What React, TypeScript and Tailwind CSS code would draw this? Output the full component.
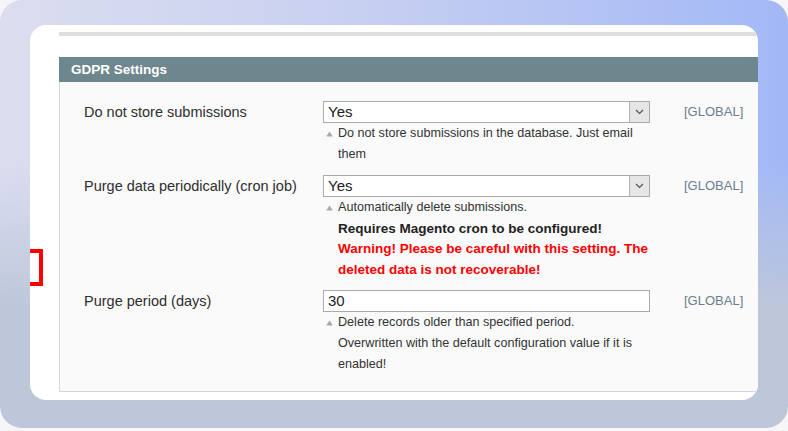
import React from 'react';

const font = { fontFamily: '"Liberation Sans", Arial, sans-serif' };

const Chevron: React.FC = () => (
  <svg width="9" height="6" viewBox="0 0 9 6" fill="none">
    <path d="M1 1l3.5 3.5L8 1" stroke="#555" strokeWidth="1.2" />
  </svg>
);

const Triangle: React.FC = () => (
  <svg width="7" height="6" viewBox="0 0 7 6">
    <path d="M3.5 0.5L6.8 5.5H0.2z" fill="#a3a9ad" />
  </svg>
);

const SelectBox: React.FC<{ value: string }> = ({ value }) => (
  <div className="flex h-[22px] items-stretch border border-[#aaaaaa] bg-white">
    <span className="pl-[4px] text-[15px] leading-[20px] text-[#222]">{value}</span>
    <span className="ml-auto flex w-[20px] items-center justify-center border-l border-[#b3b3b3] bg-[#e6e6e6]">
      <Chevron />
    </span>
  </div>
);

const TextBox: React.FC<{ value: string }> = ({ value }) => (
  <div className="h-[22px] border border-[#aaaaaa] bg-white pl-[4px] text-[15px] leading-[20px] text-[#222]">
    {value}
  </div>
);

const Note: React.FC<{ children: React.ReactNode }> = ({ children }) => (
  <div className="flex text-[12.6px] leading-[21px] text-[#333]">
    <span className="flex h-[21px] w-[15px] shrink-0 items-center pl-[3px]">
      <Triangle />
    </span>
    <div className="w-[312px]">{children}</div>
  </div>
);

const Row: React.FC<{ label: string; control: React.ReactNode; children: React.ReactNode }> = ({
  label,
  control,
  children,
}) => (
  <div className="flex items-start">
    <div className="w-[239px] text-[14.5px] leading-[22px] text-[#2e2e2e]">{label}</div>
    <div className="w-[327px]">
      {control}
      <Note>{children}</Note>
    </div>
    <div className="ml-[34px] text-[13px] leading-[22px] text-[#6b7d8e]">[GLOBAL]</div>
  </div>
);

const App: React.FC = () => {
  return (
    <div className="h-[431px] w-[788px] overflow-hidden bg-[#f6f6f9]" style={font}>
      {/* gradient frame */}
      <div className="h-[428px] w-[788px] rounded-[22px] bg-[linear-gradient(to_bottom,rgba(189,199,217,0)_38%,#bdc7d9_72%),linear-gradient(to_right,#dcdeef_0%,#c8d0f1_45%,#a2b8f6_100%)] pl-[30px] pt-[25px]">
        {/* white card */}
        <div className="relative h-[375px] w-[728px] overflow-hidden rounded-[16px] bg-white pl-[29px] pt-[7px]">
          <div className="h-[4px] w-[760px] bg-[#dedede]" />

          <div className="mt-[21px] w-[760px]">
            <div className="h-[25px] bg-[#6e868d] pl-[12px] text-[13.5px] font-bold leading-[25px] text-white">
              GDPR Settings
            </div>
            <div className="flex h-[310px] flex-col gap-[10px] border-x border-b border-[#d6d6d6] bg-[#fafafa] pl-[24px] pt-[19px]">
              <Row label="Do not store submissions" control={<SelectBox value="Yes" />}>
                Do not store submissions in the database. Just email them
              </Row>
              <Row label="Purge data periodically (cron job)" control={<SelectBox value="Yes" />}>
                <div>Automatically delete submissions.</div>
                <div className="text-[13.5px] font-bold leading-[21px] text-[#222]">
                  Requires Magento cron to be configured!
                </div>
                <div className="text-[13.5px] font-bold leading-[20.5px] text-[#ff0000]">
                  Warning! Please be careful with this setting. The deleted data is not recoverable!
                </div>
              </Row>
              <Row label="Purge period (days)" control={<TextBox value="30" />}>
                <div>Delete records older than specified period.</div>
                <div className="leading-[20.5px]">
                  Overwritten with the default configuration value if it is enabled!
                </div>
              </Row>
            </div>
          </div>

          {/* red highlight bracket */}
          <div className="absolute left-0 top-[224px] h-[37px] w-[13px] border-y-4 border-r-4 border-[#ff0000]" />
        </div>
      </div>
    </div>
  );
};

export default App;
